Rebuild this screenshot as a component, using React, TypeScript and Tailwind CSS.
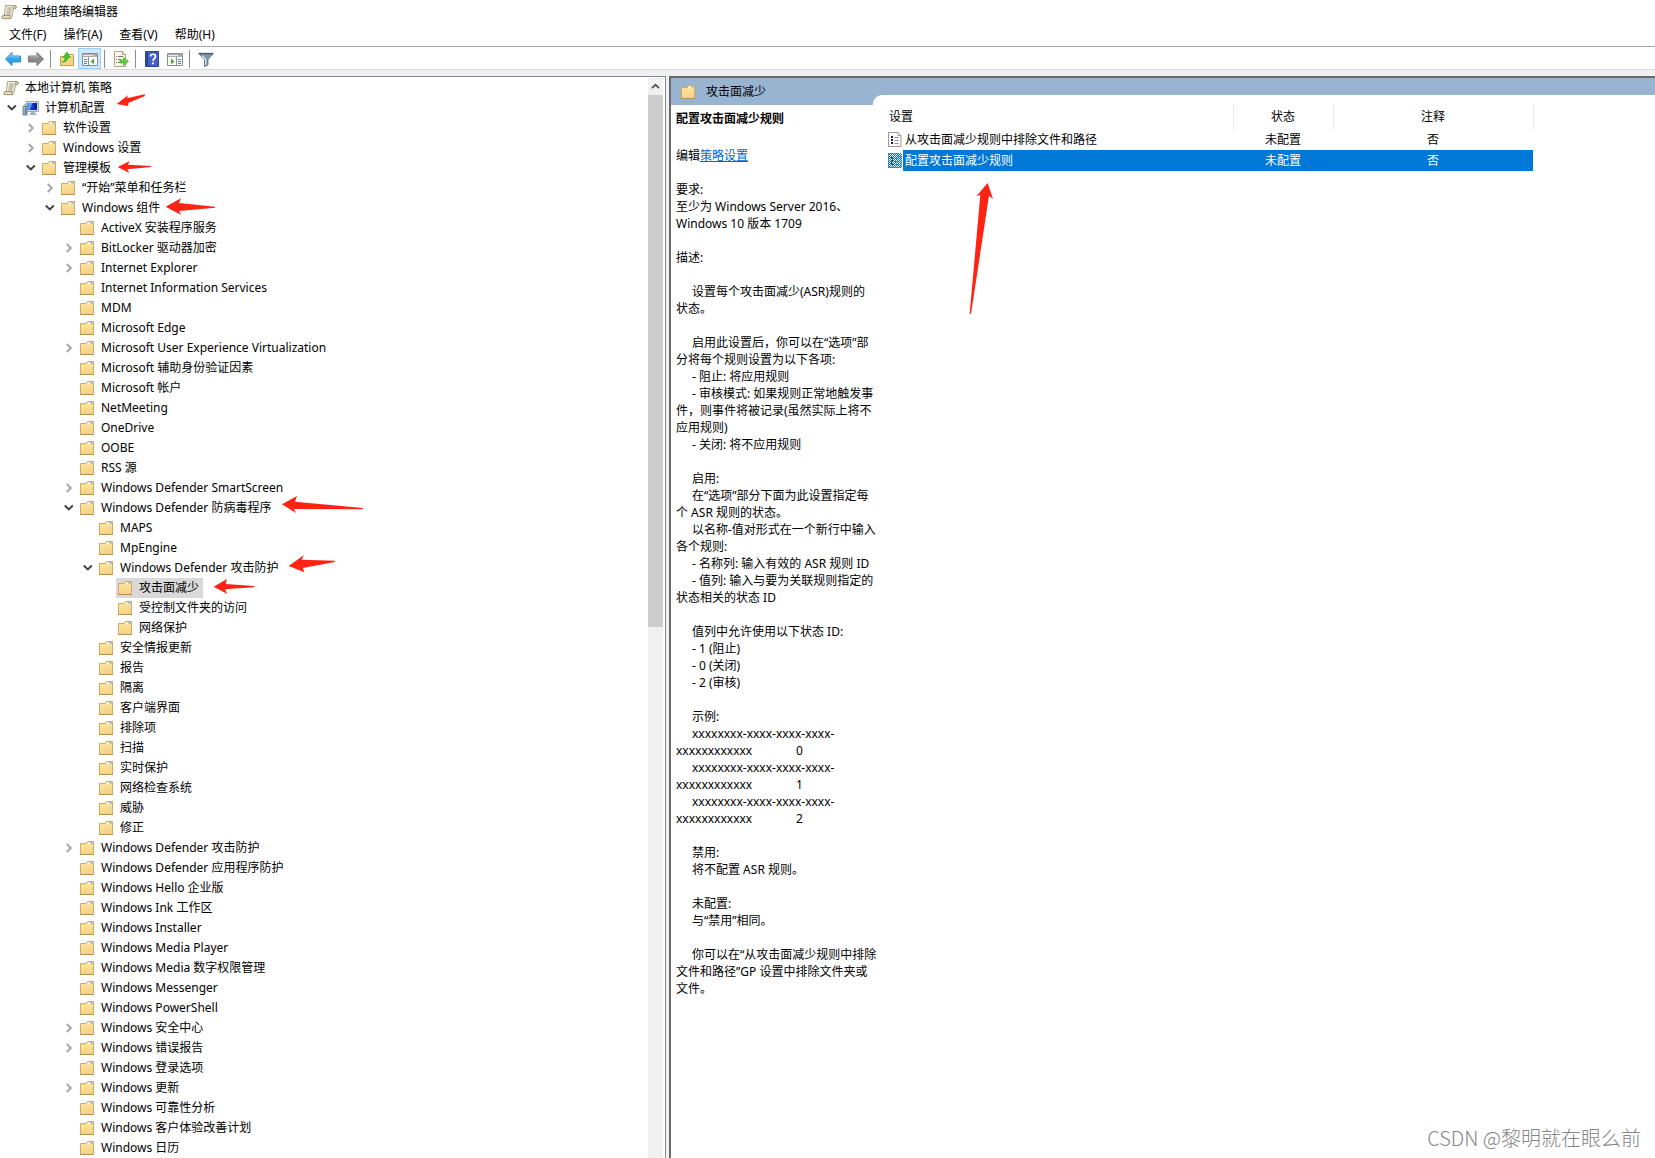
import React from 'react';

type IconName = 'scroll' | 'computer' | 'folder';
type Node = { level: number; label: string; open?: boolean; icon?: IconName; selected?: boolean };

const leaf = (level: number, label: string): Node => ({ level, label });
const branch = (level: number, label: string, open = false): Node => ({ level, label, open });

const NODES: Node[] = [
  { level: 0, label: '本地计算机 策略', icon: 'scroll' },
  { level: 1, label: '计算机配置', open: true, icon: 'computer' },
  branch(2, '软件设置'),
  branch(2, 'Windows 设置'),
  branch(2, '管理模板', true),
  branch(3, '“开始”菜单和任务栏'),
  branch(3, 'Windows 组件', true),
  leaf(4, 'ActiveX 安装程序服务'),
  branch(4, 'BitLocker 驱动器加密'),
  branch(4, 'Internet Explorer'),
  leaf(4, 'Internet Information Services'),
  leaf(4, 'MDM'),
  leaf(4, 'Microsoft Edge'),
  branch(4, 'Microsoft User Experience Virtualization'),
  leaf(4, 'Microsoft 辅助身份验证因素'),
  leaf(4, 'Microsoft 帐户'),
  leaf(4, 'NetMeeting'),
  leaf(4, 'OneDrive'),
  leaf(4, 'OOBE'),
  leaf(4, 'RSS 源'),
  branch(4, 'Windows Defender SmartScreen'),
  branch(4, 'Windows Defender 防病毒程序', true),
  leaf(5, 'MAPS'),
  leaf(5, 'MpEngine'),
  branch(5, 'Windows Defender 攻击防护', true),
  { level: 6, label: '攻击面减少', selected: true },
  leaf(6, '受控制文件夹的访问'),
  leaf(6, '网络保护'),
  leaf(5, '安全情报更新'),
  leaf(5, '报告'),
  leaf(5, '隔离'),
  leaf(5, '客户端界面'),
  leaf(5, '排除项'),
  leaf(5, '扫描'),
  leaf(5, '实时保护'),
  leaf(5, '网络检查系统'),
  leaf(5, '威胁'),
  leaf(5, '修正'),
  branch(4, 'Windows Defender 攻击防护'),
  leaf(4, 'Windows Defender 应用程序防护'),
  leaf(4, 'Windows Hello 企业版'),
  leaf(4, 'Windows Ink 工作区'),
  leaf(4, 'Windows Installer'),
  leaf(4, 'Windows Media Player'),
  leaf(4, 'Windows Media 数字权限管理'),
  leaf(4, 'Windows Messenger'),
  leaf(4, 'Windows PowerShell'),
  branch(4, 'Windows 安全中心'),
  branch(4, 'Windows 错误报告'),
  leaf(4, 'Windows 登录选项'),
  branch(4, 'Windows 更新'),
  leaf(4, 'Windows 可靠性分析'),
  leaf(4, 'Windows 客户体验改善计划'),
  leaf(4, 'Windows 日历'),
];

const INDENT = ['pl-0.5', 'pl-[3px]', 'pl-[22px]', 'pl-[41px]', 'pl-[60px]', 'pl-[79px]', 'pl-[98px]'];

/* A leading tab marks an indented line; a tab inside a line separates name and value. */
const DETAILS = [
  '要求:',
  '至少为 Windows Server 2016、',
  'Windows 10 版本 1709',
  '',
  '描述:',
  '',
  '\t设置每个攻击面减少(ASR)规则的',
  '状态。',
  '',
  '\t启用此设置后，你可以在“选项”部',
  '分将每个规则设置为以下各项:',
  '\t- 阻止: 将应用规则',
  '\t- 审核模式: 如果规则正常地触发事',
  '件，则事件将被记录(虽然实际上将不',
  '应用规则)',
  '\t- 关闭: 将不应用规则',
  '',
  '\t启用:',
  '\t在“选项”部分下面为此设置指定每',
  '个 ASR 规则的状态。',
  '\t以名称-值对形式在一个新行中输入',
  '各个规则:',
  '\t- 名称列: 输入有效的 ASR 规则 ID',
  '\t- 值列: 输入与要为关联规则指定的',
  '状态相关的状态 ID',
  '',
  '\t值列中允许使用以下状态 ID:',
  '\t- 1 (阻止)',
  '\t- 0 (关闭)',
  '\t- 2 (审核)',
  '',
  '\t示例:',
  '\txxxxxxxx-xxxx-xxxx-xxxx-',
  'xxxxxxxxxxxx\t0',
  '\txxxxxxxx-xxxx-xxxx-xxxx-',
  'xxxxxxxxxxxx\t1',
  '\txxxxxxxx-xxxx-xxxx-xxxx-',
  'xxxxxxxxxxxx\t2',
  '',
  '\t禁用:',
  '\t将不配置 ASR 规则。',
  '',
  '\t未配置:',
  '\t与“禁用”相同。',
  '',
  '\t你可以在“从攻击面减少规则中排除',
  '文件和路径”GP 设置中排除文件夹或',
  '文件。',
];

function FolderIcon() {
  return (
    <svg width="16" height="16" viewBox="0 0 16 16" className="shrink-0" aria-hidden="true">
      <defs>
        <linearGradient id="folder" x1="0" y1="0" x2="0.3" y2="1">
          <stop offset="0" stopColor="#fde7a4" />
          <stop offset="1" stopColor="#f5d283" />
        </linearGradient>
      </defs>
      <path d="M1.500 3.500h5.500l1.500-2h6v13h-13z" fill="#f6dc95" stroke="#d2ab60" />
      <path d="M9 2.500h5v1.500H8.500z" fill="#fff" />
      <path d="M11 2.500h3v1h-3z" fill="#4a9fe3" />
      <path d="M2 5h6.500l1-1H14v10H2z" fill="url(#folder)" />
      <path d="M1 14.500h14" stroke="#b8914a" />
    </svg>
  );
}

function ScrollIcon() {
  return (
    <svg width="16" height="16" viewBox="0 0 16 16" className="shrink-0" aria-hidden="true">
      <path d="M4.500 1.500h9.500c1.600 0 1.600 3 0 3h-1.500l-1.500 8c-.3 1.500-1 2-2 2H3z" fill="#f6f1da" stroke="#a39a7c" strokeWidth=".9" />
      <path d="M12.500 4.500c-.8-1 0-3 1.300-3 1.800 0 1.800 3 .2 3z" fill="#d8cfae" stroke="#8d8466" strokeWidth=".8" />
      <path d="M2 11.500h7.500c-.8 1-.5 3 .5 3.200H2c-1.600 0-1.600-3.200 0-3.200z" fill="#e5dcb9" stroke="#8d8466" strokeWidth=".8" />
      <path d="M6.200 4h4.600M5.900 6h4.600M5.600 8h4.600M5.300 10H9.500" stroke="#8b8a84" strokeWidth=".9" />
    </svg>
  );
}

function ComputerIcon() {
  return (
    <svg width="17" height="16" viewBox="0 0 17 16" className="shrink-0" aria-hidden="true">
      <path d="M4 1.500h12.500v10H4z" fill="#d6d9dc" stroke="#a3a8ad" />
      <path d="M5.500 3h9.500v7H5.500z" fill="#1233c9" />
      <path d="M5.500 3h5L8 10H5.500z" fill="#5b9cf2" />
      <path d="M12 3h3v7h-2z" fill="#0a1c96" />
      <path d="M9 12h4v1.500h1.500V15H7.500v-1.500H9z" fill="#a9b0b7" />
      <path d="M1 6.500h4v8.500H1z" fill="#a9b6c0" stroke="#6f7e8a" />
      <path d="M2 6c0-2 2-2 2.500-.5" fill="none" stroke="#8b98a3" />
      <path d="M3.500 8v6" stroke="#2f7cab" />
    </svg>
  );
}

function Chevron({ open }: { open: boolean }) {
  return (
    <svg width="10" height="10" viewBox="0 0 10 10" fill="none" aria-hidden="true">
      {open ? (
        <path d="M.8 2.500l4 4 4-4" stroke="#404040" strokeWidth="1.900" />
      ) : (
        <path d="M2.800 1l4 4-4 4" stroke="#a6a6a6" strokeWidth="1.900" />
      )}
    </svg>
  );
}

function SettingIcon({ selected }: { selected?: boolean }) {
  return (
    <svg width="14" height="15" viewBox="0 0 14 15" aria-hidden="true">
      <defs>
        <pattern id="dither" width="2" height="2" patternUnits="userSpaceOnUse">
          <path d="M0 0h1v1H0zM1 1h1v1H1z" fill="#0078d7" />
        </pattern>
      </defs>
      <path d="M.5.5h9.500l3 3v11H.5z" fill="#fafafa" stroke="#9a9a9a" />
      <path d="M10 .5v3h3" fill="#e4e4e4" stroke="#9a9a9a" />
      <path d="M3 4h2v2H3zM3 7h2v2H3zM3 10h2v2H3z" fill="#222" />
      <path d="M6.500 5.500h4M6.500 8.500h4M6.500 11.500h4" stroke="#8c86a8" />
      {selected && <path d="M0 0h14v15H0z" fill="url(#dither)" />}
    </svg>
  );
}

function TreeRow({ node }: { node: Node }) {
  const icon = node.icon ?? 'folder';
  return (
    <li
      role="treeitem"
      aria-level={node.level + 1}
      aria-expanded={node.open}
      aria-selected={!!node.selected}
      className={`flex h-5 ${INDENT[node.level]}`}
    >
      {node.level > 0 && (
        <span className="flex w-[18px] shrink-0 items-center justify-center">
          {node.open !== undefined && (
            <button type="button" aria-label={node.open ? '折叠' : '展开'}>
              <Chevron open={node.open} />
            </button>
          )}
        </span>
      )}
      <button
        type="button"
        className={`flex items-center gap-1.5 pr-1 pl-px whitespace-nowrap ${node.selected ? 'bg-[#d9d9d9]' : ''}`}
      >
        {icon === 'folder' && <FolderIcon />}
        {icon === 'scroll' && <ScrollIcon />}
        {icon === 'computer' && <ComputerIcon />}
        <span className="pb-0.5">{node.label}</span>
      </button>
    </li>
  );
}

function Separator() {
  return <span className="mr-1 ml-[3px] h-[18px] w-px bg-[#8d8d8d]" />;
}

function ToolButton({ label, active, children }: { label: string; active?: boolean; children: React.ReactNode }) {
  return (
    <button
      type="button"
      aria-label={label}
      className={`flex h-[21px] w-[23px] items-center justify-center border ${
        active ? 'border-[#99d1ff] bg-[#cce8ff]' : 'border-transparent'
      }`}
    >
      <svg width="16" height="16" viewBox="0 0 16 16" className="shrink-0" aria-hidden="true">
        {children}
      </svg>
    </button>
  );
}

function Toolbar() {
  return (
    <div role="toolbar" className="flex h-[23px] shrink-0 items-center border-b border-[#dadada] bg-white pt-px pl-px">
      <ToolButton label="后退">
        <path d="M.5 8L7 1.500v3.500h8.500v6H7v3.500z" fill="#2ea3e8" stroke="#2a7fbe" strokeWidth=".9" />
        <path d="M2.200 7.600L6.200 3.600v2.400h8.400" fill="none" stroke="#9bdcff" strokeWidth=".9" />
      </ToolButton>
      <ToolButton label="前进">
        <path d="M15.500 8L9 1.500v3.500H.5v6H9v3.500z" fill="#8a8a8a" stroke="#707070" strokeWidth=".9" />
        <path d="M1.300 6h8.400V3.500" fill="none" stroke="#c4c4c4" strokeWidth=".9" />
      </ToolButton>
      <Separator />
      <ToolButton label="向上">
        <path d="M1.500 5.500h6l1.500-2h5.500v11h-13z" fill="#f3d584" stroke="#c39f55" />
        <path d="M10 4.500h4" stroke="#fff3c9" />
        <path d="M3 11c2-.5 3-2 3-4.500l-2.200-.2L8 1l3.500 5.500-2.300-.2C9 9.500 6.500 11.500 3 11z" fill="#45c322" stroke="#3a9d1d" strokeWidth=".6" />
      </ToolButton>
      <ToolButton label="显示/隐藏控制台树" active>
        <path d="M.5 2.500h15v12H.5z" fill="#fff" stroke="#8a8d92" />
        <path d="M1 3h14v3H1z" fill="#a9adb3" />
        <path d="M1 4.500h10" stroke="#e8eaec" />
        <path d="M6.500 6v8" stroke="#8a8d92" />
        <path d="M2 8.500h3M2 10.500h3M2 12.500h3" stroke="#5b7fa8" />
        <path d="M12 7.500v6L8.500 10.500z" fill="#45b32a" />
      </ToolButton>
      <Separator />
      <ToolButton label="导出列表">
        <path d="M1.500.5h8l3 3v12h-11z" fill="#fbf8e8" stroke="#aaa48e" />
        <path d="M9.500.5v3h3" fill="#e6dfc4" stroke="#aaa48e" />
        <path d="M3 5.500h1M3 8.500h1M3 11.500h1M5 5.500h5M5 8.500h3M5 11.500h3" stroke="#77756d" />
        <path d="M7 9h3.500V6.500l5 4-5 4V12H7z" fill="#62cf3c" stroke="#4bb02b" strokeWidth=".7" />
      </ToolButton>
      <Separator />
      <ToolButton label="帮助">
        <path d="M1.500.5h13v15h-13z" fill="#4560c6" stroke="#2c4499" />
        <path d="M2 1h2v14H2z" fill="#2c4499" />
        <path d="M6.500 5.500c0-3 5-3 5 0 0 2-2.400 2-2.400 4.500" fill="none" stroke="#fff" strokeWidth="1.700" />
        <path d="M8.200 11.300h1.800v1.900H8.200z" fill="#fff" />
      </ToolButton>
      <ToolButton label="显示/隐藏操作窗格">
        <path d="M.5 2.500h15v12H.5z" fill="#fff" stroke="#8a8d92" />
        <path d="M1 3h14v3H1z" fill="#a9adb3" />
        <path d="M1 4.500h10" stroke="#e8eaec" />
        <path d="M9.500 6v8" stroke="#8a8d92" />
        <path d="M11 8.500h3M11 10.500h3M11 12.500h3" stroke="#5b7fa8" />
        <path d="M4 7.500v6l3.500-3z" fill="#45b32a" />
      </ToolButton>
      <Separator />
      <ToolButton label="筛选器选项">
        <path d="M.8 2.500h14.400L10 8.500v5.500l-3.500 1.500v-7z" fill="#7f96a8" stroke="#566b7c" strokeWidth=".8" />
        <path d="M.8 1.800h14.400v1.700H.8z" fill="#4a6479" />
        <path d="M4 4.500l3.700 4v5.500" fill="none" stroke="#dce8f0" strokeWidth="1.200" />
      </ToolButton>
    </div>
  );
}

function DetailLine({ text }: { text: string }) {
  const indented = text.startsWith('\t');
  const [name, value] = text.trimStart().split('\t');
  return (
    <div className={`flex h-[17px] whitespace-nowrap ${indented ? 'pl-4' : ''}`}>
      <span className={value ? 'w-[120px]' : ''}>{name}</span>
      {value && <span>{value}</span>}
    </div>
  );
}

function SettingsTable() {
  const rows = [
    { name: '从攻击面减少规则中排除文件和路径', selected: false },
    { name: '配置攻击面减少规则', selected: true },
  ];
  return (
    <table className="w-[650px] table-fixed border-collapse">
      <colgroup>
        <col className="w-[20px]" />
        <col className="w-[330px]" />
        <col className="w-[100px]" />
        <col className="w-[200px]" />
      </colgroup>
      <thead>
        <tr className="h-6">
          <th colSpan={2} className="border-r border-[#e5e5e5] p-0 pb-0.5 pl-1.5 text-left font-normal">设置</th>
          <th className="border-r border-[#e5e5e5] p-0 pb-0.5 font-normal">状态</th>
          <th className="border-r border-[#e5e5e5] p-0 pb-0.5 font-normal">注释</th>
        </tr>
      </thead>
      <tbody>
        {rows.map((row) => (
          <tr key={row.name} className="h-[21px]">
            <td className="p-0 pl-[5px]"><SettingIcon selected={row.selected} /></td>
            <td className={`p-0 pl-0.5 ${row.selected ? 'bg-[#0078d7] text-white' : ''}`}>{row.name}</td>
            <td className={`p-0 text-center ${row.selected ? 'bg-[#0078d7] text-white' : ''}`}>未配置</td>
            <td className={`p-0 text-center ${row.selected ? 'bg-[#0078d7] text-white' : ''}`}>否</td>
          </tr>
        ))}
      </tbody>
    </table>
  );
}

/* Hand-drawn pointers laid over the window, in thirds of a pixel. */
function Pointers() {
  return (
    <svg className="pointer-events-none absolute inset-0 h-full w-full" fill="#ff2314" aria-hidden="true">
      <g transform="scale(.33333)">
        <path d="M350 312l34-26-3 9 53-12 1 5-49 20-2 10z" />
        <path d="M353 501l36-18-5 11 70 4v3l-72 7 6 11z" />
        <path d="M497 620l46-25-6 14 108 11v3l-108 10 7 12z" />
      </g>
      <g transform="translate(0 480) scale(.33333)">
        <path d="M846 73l45-25-6 17 204 19-1 4-206-1 6 12z" />
        <path d="M866 258l45-32-6 13 100 3-1 4-95 18 4 13z" />
        <path d="M641 320l40-23-4 15 86 6-1 4-87 6 7 14z" />
      </g>
      <g transform="translate(640 60) scale(.33333)">
        <path d="M1043 369l16 48-12-10-54 355-4-1 32-357-12 5z" />
      </g>
    </svg>
  );
}

export default function App() {
  return (
    <div className="relative flex min-h-screen flex-col overflow-hidden bg-white font-['Noto_Sans','Noto_Sans_CJK_SC',sans-serif] text-[12px] leading-[17px] text-black">
      <header className="flex h-6 shrink-0 items-center gap-[5px] pl-px">
        <ScrollIcon />
        <h1 className="pb-0.5">本地组策略编辑器</h1>
      </header>
      <nav className="flex h-[23px] shrink-0 items-center gap-[17px] border-b border-[#a9a9a9] pb-0.5 pl-[9px]">
        <button type="button">文件(F)</button>
        <button type="button">操作(A)</button>
        <button type="button">查看(V)</button>
        <button type="button">帮助(H)</button>
      </nav>
      <Toolbar />
      <div className="h-1.5 shrink-0 bg-[#f0f0f0]" />

      <div className="flex grow bg-[#f0f0f0]">
        <aside className="flex w-[666px] shrink-0 border-t border-r border-[#828790] bg-white pt-px pr-0.5">
          <ul role="tree" className="grow">
            {NODES.map((node, i) => (
              <TreeRow key={i} node={node} />
            ))}
          </ul>
          <div className="flex w-[15px] shrink-0 flex-col bg-[#f0f0f0]">
            <button type="button" aria-label="向上滚动" className="flex h-[17px] items-center justify-center">
              <svg width="9" height="9" viewBox="0 0 9 9" fill="none" aria-hidden="true">
                <path d="M1 6.200l3.500-3.500L8 6.200" stroke="#505050" strokeWidth="1.800" />
              </svg>
            </button>
            <div className="grow">
              <div className="h-[532px] bg-[#cdcdcd]" />
            </div>
          </div>
        </aside>

        <main className="ml-[3px] grow border-t-2 border-l-2 border-[#696969] bg-white">
          <div className="flex">
            <section className="w-[202px] shrink-0">
              <h2 className="flex h-[27px] items-center gap-2.5 bg-[#99b4d1] pl-[9px]">
                <FolderIcon />
                攻击面减少
              </h2>
              <div className="pl-[5px]">
                <h3 className="mt-[5px] font-bold">配置攻击面减少规则</h3>
                <p className="mt-5 mb-[17px]">
                  编辑<a href="#policy" className="text-[#0066cc] underline">策略设置</a>
                </p>
                {DETAILS.map((text, i) => (
                  <DetailLine key={i} text={text} />
                ))}
              </div>
            </section>
            <section className="grow">
              <div className="bg-[#99b4d1] pt-[17px]">
                <div className="h-2.5 rounded-tl-[9px] bg-white" />
              </div>
              <div className="pl-[10px]">
                <SettingsTable />
              </div>
            </section>
          </div>
        </main>
      </div>

      <Pointers />
      <p className="absolute right-3.5 bottom-2 font-['Noto_Sans_CJK_SC',sans-serif] text-[20px] leading-[24px] font-light text-[#858585]">
        CSDN @黎明就在眼么前
      </p>
    </div>
  );
}
